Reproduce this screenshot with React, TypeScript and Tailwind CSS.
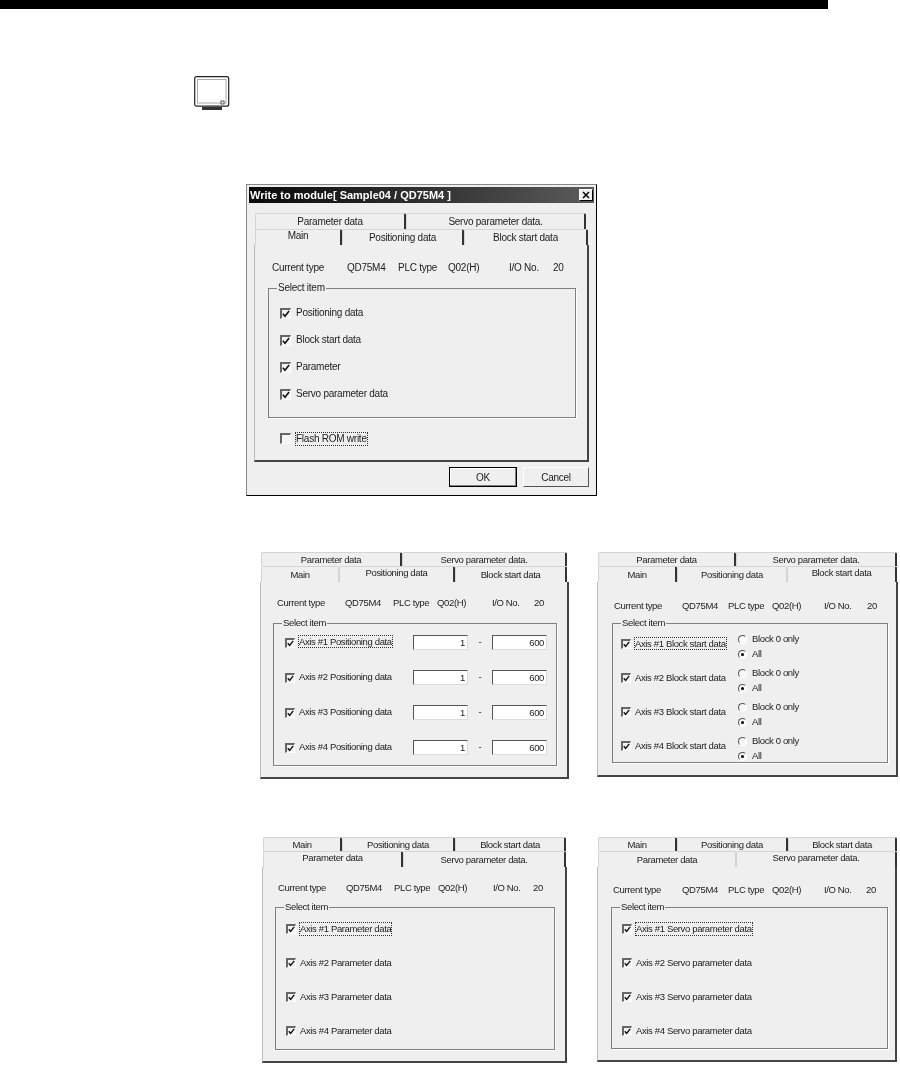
import type { ReactNode } from "react";

type TabDef = { label: string; width: string; active?: boolean };

const font = "font-['Liberation_Sans',Arial,sans-serif]";

const Tab = ({
  label,
  width,
  active,
  height,
  beforeActive,
}: TabDef & { height: string; beforeActive?: boolean }) => (
  <div
    className={`${width} ${height} flex justify-center rounded-t-[2px] border-t border-l border-[#d4d4d4] bg-[#efefef] ${
      active ? "items-start" : "items-center"
    } ${beforeActive ? "border-r border-r-[#d4d4d4]" : "border-r-2 border-r-[#333]"}`}
  >
    <span className="leading-[12px]">{label}</span>
  </div>
);

const Check = ({ className = "h-[10px] w-[10px]", on = true }: { className?: string; on?: boolean }) => (
  <span
    className={`${className} flex shrink-0 items-center justify-center border-t-2 border-r border-b border-l-2 border-t-[#666] border-r-white border-b-white border-l-[#666] bg-[#f4f4f4]`}
  >
    {on && (
      <svg viewBox="0 0 9 9" className="h-full w-full">
        <path d="M1 4.2 L3.4 7 L8 1.2" fill="none" stroke="#111" strokeWidth="1.8" />
      </svg>
    )}
  </span>
);

const Radio = ({ on }: { on?: boolean }) => (
  <span className="flex h-[9px] w-[9px] shrink-0 items-center justify-center rounded-full border border-t-[#555] border-r-white border-b-white border-l-[#555] bg-[#f8f8f8]">
    {on && <span className="h-[3px] w-[3px] rounded-full bg-black" />}
  </span>
);

const Label = ({ text, focus }: { text: string; focus?: boolean }) => (
  <span
    className={`border leading-[12px] whitespace-nowrap ${
      focus ? "border-dotted border-[#333]" : "border-transparent"
    }`}
  >
    {text}
  </span>
);

const Field = ({ value }: { value: string }) => (
  <input
    readOnly
    value={value}
    className="h-[15px] w-[55px] border border-t-[#555] border-r-[#ddd] border-b-[#ddd] border-l-[#555] bg-white pr-[2px] text-right leading-[12px]"
  />
);

const Info = ({ className }: { className: string }) => (
  <div className={`${className} grid h-[12px] leading-[12px] whitespace-nowrap`}>
    <span>Current type</span>
    <span>QD75M4</span>
    <span>PLC type</span>
    <span>Q02(H)</span>
    <span>I/O No.</span>
    <span>20</span>
  </div>
);

const Group = ({ className, children }: { className: string; children: ReactNode }) => (
  <fieldset className={`${className} border border-[#808080] shadow-[1px_1px_0_#fff]`}>
    <legend className="ml-[8px] px-[1px] leading-[12px]">Select item</legend>
    {children}
  </fieldset>
);

const TabPanel = ({
  className,
  back,
  front,
  backHeight = "h-[14px]",
  children,
}: {
  className: string;
  back: TabDef[];
  front: TabDef[];
  backHeight?: string;
  children: ReactNode;
}) => (
  <div className={`${className} flex shrink-0 flex-col`}>
    <div className="flex pl-[1px]">
      {back.map((t) => (
        <Tab key={t.label} {...t} height={backHeight} />
      ))}
    </div>
    <div className="flex pl-[1px]">
      {front.map((t, i) => (
        <Tab key={t.label} {...t} height="h-[16px]" beforeActive={front[i + 1]?.active} />
      ))}
    </div>
    <div className="flex-1 border-r-2 border-b-2 border-l border-r-[#444] border-b-[#444] border-l-[#bbb] bg-[#efefef]">
      {children}
    </div>
  </div>
);

const mainTabs = (main: string, pos: string, block: string, active?: string): TabDef[] => [
  { label: "Main", width: main, active: active === "Main" },
  { label: "Positioning data", width: pos, active: active === "Positioning data" },
  { label: "Block start data", width: block, active: active === "Block start data" },
];

const paramTabs = (param: string, servo: string, active?: string): TabDef[] => [
  { label: "Parameter data", width: param, active: active === "Parameter data" },
  { label: "Servo parameter data.", width: servo, active: active === "Servo parameter data." },
];

const MainRows = ["Positioning data", "Block start data", "Parameter", "Servo parameter data"];

export default function App() {
  return (
    <div className={`${font} h-[1065px] w-[900px] overflow-hidden bg-white text-[#1c1c1c]`}>
      <div className="h-[9px] w-[828px] bg-black" />

      {/* monitor icon */}
      <svg viewBox="0 0 36 35" className="mt-[67px] ml-[194px] h-[35px] w-[36px]">
        <rect x="0.7" y="0.7" width="34" height="29.5" rx="2" fill="#fff" stroke="#222" strokeWidth="1.2" />
        <rect x="3.5" y="3.5" width="28.5" height="23.5" fill="#fff" stroke="#aaa" strokeWidth="1" />
        <rect x="27" y="25" width="3" height="3" fill="#fff" stroke="#333" strokeWidth="0.8" />
        <rect x="8" y="31" width="20" height="3" fill="#333" />
      </svg>

      {/* Write to module dialog */}
      <div className="mt-[73px] ml-[246px] flex h-[312px] w-[351px] flex-col border border-t-[#888] border-r-black border-b-black border-l-[#888] bg-[#efefef] p-[2px] text-[10px] tracking-[-0.25px] blur-[0.3px]">
        <div className="flex h-[16px] items-center justify-between bg-gradient-to-r from-[#0a0a0a] to-[#5c5c5c] pr-[1px] pl-[1px] text-[11px] leading-[13px] font-bold tracking-normal text-white">
          <span>Write to module[ Sample04 / QD75M4 ]</span>
          <span className="flex h-[12px] w-[14px] items-center justify-center border border-t-white border-r-black border-b-black border-l-white bg-[#efefef]">
            <svg viewBox="0 0 8 8" className="h-[8px] w-[8px]">
              <path d="M1 1 L7 7 M7 1 L1 7" stroke="#000" strokeWidth="1.5" />
            </svg>
          </span>
        </div>
        <TabPanel
          className="mt-[10px] ml-[5px] h-[249px] w-[335px]"
          backHeight="h-[16px]"
          back={paramTabs("w-[151px]", "w-[180px]")}
          front={mainTabs("w-[87px]", "w-[122px]", "w-[124px]", "Main")}
        >
          <Info className="mt-[17px] ml-[17px] grid-cols-[75px_51px_50px_61px_44px_auto]" />
          <Group className="mt-[8px] ml-[13px] h-[136px] w-[308px]">
            <div className="flex flex-col gap-[15px] pt-[13px] pl-[11px]">
              {MainRows.map((text) => (
                <div key={text} className="flex h-[12px] items-center gap-[4px]">
                  <Check className="h-[11px] w-[11px]" />
                  <Label text={text} />
                </div>
              ))}
            </div>
          </Group>
          <div className="mt-[14px] ml-[25px] flex h-[13px] items-center gap-[4px]">
            <Check className="h-[11px] w-[11px]" on={false} />
            <Label text="Flash ROM write" focus />
          </div>
        </TabPanel>
        <div className="mt-[5px] flex justify-end gap-[6px] pr-[5px]">
          <button className="h-[20px] w-[68px] border border-black bg-[#efefef] shadow-[inset_-1px_-1px_0_#808080,inset_1px_1px_0_#fff]">OK</button>
          <button className="h-[20px] w-[66px] border border-t-white border-r-[#555] border-b-[#555] border-l-white bg-[#efefef]">Cancel</button>
        </div>
      </div>

      {/* axis tabs, first row */}
      <div className="mt-[56px] flex pl-[260px] text-[9.5px] tracking-[-0.36px] blur-[0.3px]">
        <TabPanel
          className="h-[227px] w-[309px]"
          back={paramTabs("w-[141px]", "w-[165px]")}
          front={mainTabs("w-[78px]", "w-[116px]", "w-[112px]", "Positioning data")}
        >
          <Info className="mt-[15px] ml-[16px] grid-cols-[68px_48px_44px_55px_42px_auto]" />
          <Group className="mt-[8px] ml-[12px] h-[149px] w-[284px]">
            <div className="flex flex-col gap-[20px] pt-[6px] pl-[11px]">
              {[1, 2, 3, 4].map((n) => (
                <div key={n} className="flex h-[15px] items-center">
                  <Check />
                  <span className="ml-[3px] w-[115px]">
                    <Label text={`Axis #${n} Positioning data`} focus={n === 1} />
                  </span>
                  <Field value="1" />
                  <span className="w-[24px] text-center">-</span>
                  <Field value="600" />
                </div>
              ))}
            </div>
          </Group>
        </TabPanel>

        <TabPanel
          className="ml-[28px] h-[225px] w-[301px]"
          back={paramTabs("w-[138px]", "w-[161px]")}
          front={mainTabs("w-[79px]", "w-[110px]", "w-[110px]", "Block start data")}
        >
          <Info className="mt-[18px] ml-[16px] grid-cols-[68px_46px_44px_52px_43px_auto]" />
          <Group className="mt-[5px] ml-[14px] h-[146px] w-[276px]">
            <div className="flex flex-col gap-[8px] pt-[2px] pl-[8px]">
              {[1, 2, 3, 4].map((n) => (
                <div key={n} className="flex h-[26px] items-center">
                  <Check />
                  <span className="ml-[3px] w-[104px]">
                    <Label text={`Axis #${n} Block start data`} focus={n === 1} />
                  </span>
                  <div className="mt-[5px] flex flex-col gap-[3px] leading-[12px]">
                    <div className="flex items-center gap-[5px]">
                      <Radio />
                      <span>Block 0 only</span>
                    </div>
                    <div className="flex items-center gap-[5px]">
                      <Radio on />
                      <span>All</span>
                    </div>
                  </div>
                </div>
              ))}
            </div>
          </Group>
        </TabPanel>
      </div>

      {/* axis tabs, second row */}
      <div className="mt-[58px] flex pl-[262px] text-[9.5px] tracking-[-0.36px] blur-[0.3px]">
        <TabPanel
          className="h-[226px] w-[305px]"
          back={mainTabs("w-[79px]", "w-[113px]", "w-[111px]")}
          front={paramTabs("w-[140px]", "w-[163px]", "Parameter data")}
        >
          <Info className="mt-[15px] ml-[15px] grid-cols-[68px_48px_44px_55px_40px_auto]" />
          <Group className="mt-[7px] ml-[12px] h-[149px] w-[280px]">
            <div className="flex flex-col gap-[22px] pt-[10px] pl-[10px]">
              {[1, 2, 3, 4].map((n) => (
                <div key={n} className="flex h-[12px] items-center gap-[3px]">
                  <Check />
                  <Label text={`Axis #${n} Parameter data`} focus={n === 1} />
                </div>
              ))}
            </div>
          </Group>
        </TabPanel>

        <TabPanel
          className="ml-[30px] h-[225px] w-[300px]"
          back={mainTabs("w-[79px]", "w-[111px]", "w-[109px]")}
          front={paramTabs("w-[138px]", "w-[161px]", "Servo parameter data.")}
        >
          <Info className="mt-[17px] ml-[15px] grid-cols-[69px_46px_44px_52px_42px_auto]" />
          <Group className="mt-[5px] ml-[13px] h-[148px] w-[277px]">
            <div className="flex flex-col gap-[22px] pt-[10px] pl-[10px]">
              {[1, 2, 3, 4].map((n) => (
                <div key={n} className="flex h-[12px] items-center gap-[3px]">
                  <Check />
                  <Label text={`Axis #${n} Servo parameter data`} focus={n === 1} />
                </div>
              ))}
            </div>
          </Group>
        </TabPanel>
      </div>
    </div>
  );
}
